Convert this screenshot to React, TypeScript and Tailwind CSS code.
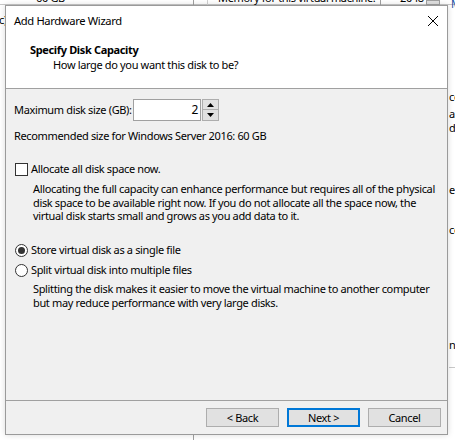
import React from "react";

const font = "font-['Noto_Sans','Open_Sans',sans-serif]";

const Backdrop = (): JSX.Element => {
  return (
    <>
      {/* window behind the wizard */}
      <div className="absolute left-0 top-0 w-[455px] h-[5px] border-b border-[#c8c8c8] bg-white" />
      <div className="absolute left-[193px] top-0 h-[6px] border-l border-[#a0a0a0]" />
      <div className="absolute left-[207px] top-0 h-[6px] border-l border-[#d0d0d0]" />
      <div className="absolute left-[380px] top-0 h-[6px] border-l border-[#a0a0a0]" />
      <span className="absolute left-[36px] top-[-9px] leading-[14px]">60 GB</span>
      <span className="absolute left-[218px] top-[-9px] leading-[14px] w-[158px] overflow-hidden">
        Memory for this virtual machine:
      </span>
      <span className="absolute left-[400px] top-[-9px] leading-[14px]">2048</span>
      <div className="absolute left-[426px] top-0 w-[14px] h-[5px] border border-[#a0a0a0] bg-[#e1e1e1]" />
      <span className="absolute left-[451px] top-[-3px] leading-[14px] text-[#1a4fa0]">M</span>
      <span className="absolute left-[-1px] top-[13px] leading-[14px]">c)</span>
      <span className="absolute left-[449px] top-[90px] leading-[14px]">co</span>
      <span className="absolute left-[449px] top-[107px] leading-[13px]">ap</span>
      <span className="absolute left-[449px] top-[121px] leading-[13px]">d</span>
      <span className="absolute left-[449px] top-[183px] leading-[14px]">e</span>
      <span className="absolute left-[449px] top-[223px] leading-[14px]">co</span>
      <span className="absolute left-[449px] top-[338px] leading-[14px]">n</span>
      <div className="absolute left-[449px] top-[367px] w-[6px] border-t border-[#c8c8c8]" />
      <div className="absolute left-[193px] top-[434px] h-[6px] border-l border-[#a0a0a0]" />
    </>
  );
};

const SpinInput = ({ value }: { value: string }): JSX.Element => {
  return (
    <div className="flex h-[22px]">
      <div className="w-[68px] h-[22px] border border-[#a0a0a0] bg-white flex items-center justify-end pr-[2px]">
        <span className="text-[12px]">{value}</span>
      </div>
      <div className="flex flex-col w-[17px] ml-[1px]">
        <div className="h-[11px] border border-[#adadad] bg-[#e1e1e1] flex items-center justify-center">
          <svg width="7" height="4" viewBox="0 0 7 4">
            <path d="M0 4 L3.5 0 L7 4 Z" fill="#000" />
          </svg>
        </div>
        <div className="h-[11px] border border-t-0 border-[#adadad] bg-[#e1e1e1] flex items-center justify-center">
          <svg width="7" height="4" viewBox="0 0 7 4">
            <path d="M0 0 L3.5 4 L7 0 Z" fill="#000" />
          </svg>
        </div>
      </div>
    </div>
  );
};

const Radio = ({ checked, label }: { checked?: boolean; label: string }): JSX.Element => {
  return (
    <div className="flex items-center h-[14px]">
      <div className="w-[13px] h-[13px] rounded-full border border-[#333] bg-white flex items-center justify-center">
        {checked && <div className="w-[7px] h-[7px] rounded-full bg-[#333]" />}
      </div>
      <span className="ml-[3px]">{label}</span>
    </div>
  );
};

const App = (): JSX.Element => {
  return (
    <div
      className={`relative w-[455px] h-[440px] overflow-hidden bg-white text-black text-[11px] tracking-[-0.35px] whitespace-nowrap ${font}`}
    >
      <Backdrop />

      <div className="absolute left-[5px] top-[5px] w-[443px] h-[430px] border border-[#9a9a9a] bg-[#f0f0f0] flex flex-col shadow-[0_0_6px_rgba(0,0,0,0.15)]">
        {/* title + header */}
        <div className="bg-white h-[83px] border-b border-[#a0a0a0] flex flex-col">
          <div className="flex items-center justify-between h-[30px] pl-[8px] pr-[8px]">
            <span className="leading-[14px] text-[11.2px]">Add Hardware Wizard</span>
            <svg width="10" height="10" viewBox="0 0 10 10" className="mr-[1px]">
              <path d="M0 0 L10 10 M10 0 L0 10" stroke="#000" strokeWidth="1" />
            </svg>
          </div>
          <div className="pl-[24px] mt-[7px] font-bold leading-[14px]">Specify Disk Capacity</div>
          <div className="pl-[47px] mt-[1px] leading-[14px]">How large do you want this disk to be?</div>
        </div>

        {/* body */}
        <div className="flex-1 flex flex-col pl-[8px]">
          <div className="flex items-center mt-[10px]">
            <span className="w-[119px]">Maximum disk size (GB):</span>
            <SpinInput value="2" />
          </div>
          <div className="mt-[8px] leading-[13px]">Recommended size for Windows Server 2016: 60 GB</div>

          <div className="flex items-center h-[14px] mt-[20px] pl-[1px]">
            <div className="w-[13px] h-[13px] border border-[#333] bg-white" />
            <span className="ml-[3px]">Allocate all disk space now.</span>
          </div>
          <div className="pl-[19px] mt-[6px] leading-[13.5px]">
            Allocating the full capacity can enhance performance but requires all of the physical
            <br />
            disk space to be available right now. If you do not allocate all the space now, the
            <br />
            virtual disk starts small and grows as you add data to it.
          </div>

          <div className="mt-[21px] pl-[1px]">
            <Radio checked label="Store virtual disk as a single file" />
          </div>
          <div className="mt-[6px] pl-[1px]">
            <Radio label="Split virtual disk into multiple files" />
          </div>
          <div className="pl-[19px] mt-[4px] leading-[14px]">
            Splitting the disk makes it easier to move the virtual machine to another computer
            <br />
            but may reduce performance with very large disks.
          </div>
        </div>

        {/* footer */}
        <div className="h-[34px] border-t border-[#a0a0a0] flex justify-end gap-[8px] pt-[7px] pr-[6px]">
          <button className="w-[73px] h-[19px] border border-[#adadad] bg-[#e1e1e1] leading-[14px]">&lt; Back</button>
          <button className="w-[73px] h-[19px] border-2 border-[#0078d7] bg-[#e1e1e1] leading-[14px]">Next &gt;</button>
          <button className="w-[73px] h-[19px] border border-[#adadad] bg-[#e1e1e1] leading-[14px]">Cancel</button>
        </div>
      </div>
    </div>
  );
};

export default App;
